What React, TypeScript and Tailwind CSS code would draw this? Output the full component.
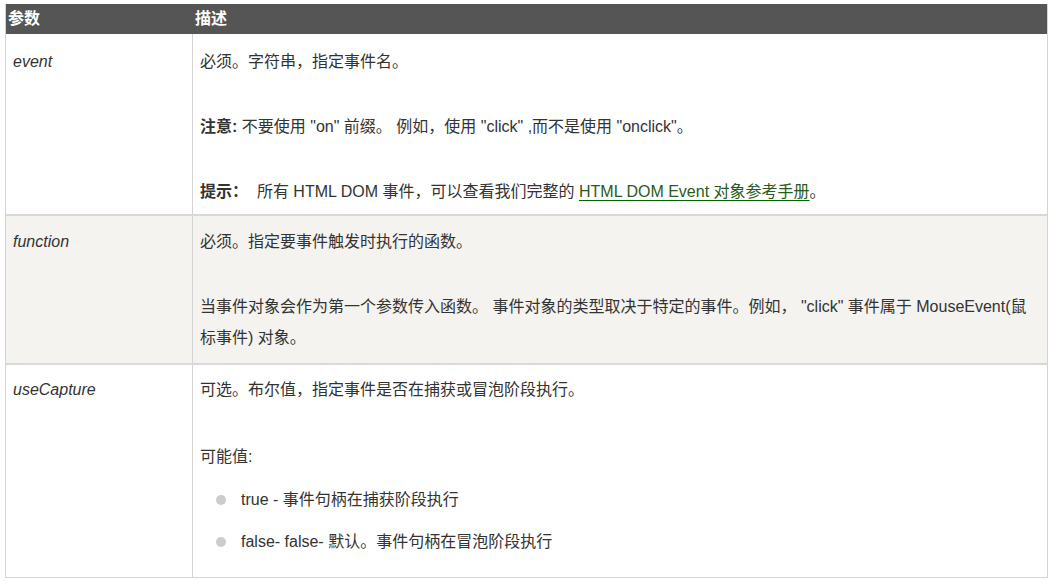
import React from "react";

const font = "font-['Liberation_Sans','Noto_Sans_CJK_SC',sans-serif]";

function Bullet({ children }: { children: React.ReactNode }) {
  return (
    <li className="flex items-center leading-[31px]">
      <span className="ml-[16px] mr-[15px] h-[10px] w-[10px] rounded-full bg-[#cccccc]" />
      <span>{children}</span>
    </li>
  );
}

export default function App() {
  return (
    <div className={`min-h-[581px] bg-white pl-[5px] pr-[1px] pt-[4px] ${font} text-[16px] text-[#333]`}>
      <div className="border-b border-l border-r border-[#d4d4d4]">
        {/* header */}
        <div className="grid h-[30px] grid-cols-[187px_1fr] items-center bg-[#555555] text-[16px] font-bold text-white">
          <div className="pl-[2px]">参数</div>
          <div className="pl-[2px]">描述</div>
        </div>

        {/* event */}
        <div className="grid grid-cols-[187px_1fr] border-b-2 border-[#d8d8d8] bg-white">
          <div className="border-r border-[#d4d4d4] pl-[7px] pt-[12px] italic leading-[31px]">event</div>
          <div className="pl-[7px] pr-[8px] pb-[7px] pt-[12px] leading-[31px]">
            <p>必须。字符串，指定事件名。</p>
            <p className="mt-[34px]">
              <b>注意:</b> 不要使用 "on" 前缀。 例如，使用 "click" ,而不是使用 "onclick"。
            </p>
            <p className="mt-[34px]">
              <b>提示：</b>&nbsp; 所有 HTML DOM 事件，可以查看我们完整的{" "}
              <a href="#" className="text-[#2a5a1c] underline decoration-[#006600] underline-offset-[3px]">
                HTML DOM Event 对象参考手册
              </a>
              。
            </p>
          </div>
        </div>

        {/* function */}
        <div className="grid grid-cols-[187px_1fr] border-b-2 border-[#d8d8d8] bg-[#f4f3f0]">
          <div className="border-r border-[#d4d4d4] pl-[7px] pt-[10px] italic leading-[31px]">function</div>
          <div className="pl-[7px] pr-[6px] pb-[10px] pt-[10px] leading-[31px]">
            <p>必须。指定要事件触发时执行的函数。</p>
            <p className="mt-[34px]">
              当事件对象会作为第一个参数传入函数。 事件对象的类型取决于特定的事件。例如， "click" 事件属于 MouseEvent(鼠标事件) 对象。
            </p>
          </div>
        </div>

        {/* useCapture */}
        <div className="grid grid-cols-[187px_1fr] bg-white">
          <div className="border-r border-[#d4d4d4] pl-[7px] pt-[9px] italic leading-[31px]">useCapture</div>
          <div className="pl-[7px] pr-[8px] pb-[20px] pt-[9px] leading-[31px]">
            <p>可选。布尔值，指定事件是否在捕获或冒泡阶段执行。</p>
            <p className="mt-[36px]">可能值:</p>
            <ul className="mt-[12px] flex flex-col gap-[11px]">
              <Bullet>true - 事件句柄在捕获阶段执行</Bullet>
              <Bullet>false- false- 默认。事件句柄在冒泡阶段执行</Bullet>
            </ul>
          </div>
        </div>
      </div>
    </div>
  );
}
